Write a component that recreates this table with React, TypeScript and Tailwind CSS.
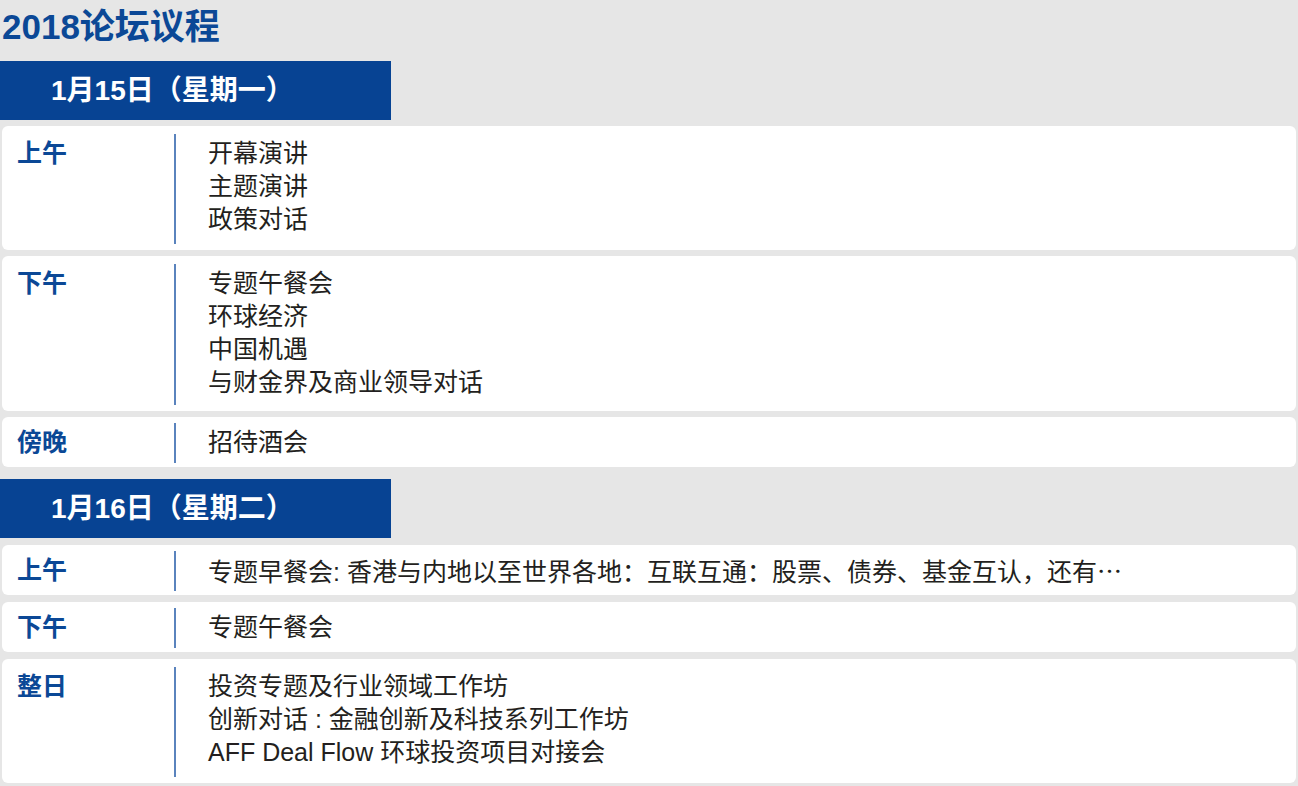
import React from "react";

type Session = {
  label: string;
  items: React.ReactNode[];
  size: string;
};

type Day = {
  date: string;
  top: string;
  list: string;
  sessions: Session[];
};

const multi = "h-[124px] pt-[8px] pb-[6px]";
const single = "h-[50px] pt-[6px] pb-[4px]";

const days: Day[] = [
  {
    date: "1月15日（星期一）",
    top: "",
    list: "mt-[6px] gap-[6px]",
    sessions: [
      { label: "上午", items: ["开幕演讲", "主题演讲", "政策对话"], size: multi },
      {
        label: "下午",
        items: ["专题午餐会", "环球经济", "中国机遇", "与财金界及商业领导对话"],
        size: "h-[155px] pt-[8px] pb-[6px]",
      },
      { label: "傍晚", items: ["招待酒会"], size: single },
    ],
  },
  {
    date: "1月16日（星期二）",
    top: "mt-[12px]",
    list: "mt-[7px] gap-[7px]",
    sessions: [
      {
        label: "上午",
        items: [
          <>
            专题早餐会: 香港与内地以至世界各地：互联互通：股票、债券、基金互认，还有
            <span className="font-['Noto_Sans_CJK_SC',sans-serif]">…</span>
          </>,
        ],
        size: single,
      },
      { label: "下午", items: ["专题午餐会"], size: single },
      {
        label: "整日",
        items: [
          "投资专题及行业领域工作坊",
          "创新对话 : 金融创新及科技系列工作坊",
          "AFF Deal Flow 环球投资项目对接会",
        ],
        size: multi,
      },
    ],
  },
];

const font = "font-['Liberation_Sans','Noto_Sans_CJK_SC',sans-serif]";

const SessionCard = ({ session }: { session: Session }) => (
  <div className={`mx-[2px] flex rounded-[6px] bg-white ${session.size}`}>
    {/* time label */}
    <div className="w-[172px] shrink-0 pl-[15px] pt-[3px] text-[25px] font-bold leading-[33px] text-[#0b4896]">
      {session.label}
    </div>
    {/* agenda items */}
    <div className="flex-1 border-l-2 border-[#5a83bd] pl-[32px] pt-[3px] text-[25px] leading-[33px] text-[#231f20]">
      {session.items.map((item, i) => (
        <div key={i} className="whitespace-nowrap">
          {item}
        </div>
      ))}
    </div>
  </div>
);

const App = () => {
  return (
    <div className={`h-[786px] w-[1298px] overflow-hidden bg-[#e6e6e6] ${font}`}>
      <h1 className="flex h-[61px] items-center pb-[9px] pl-[2px] text-[35px] font-bold leading-none text-[#0b4896]">
        2018论坛议程
      </h1>

      {days.map((day) => (
        <div key={day.date} className={day.top}>
          <div className="flex h-[59px] w-[391px] items-center bg-[#074393] pl-[51px] text-[28px] font-bold leading-none text-white">
            {day.date}
          </div>
          <div className={`flex flex-col ${day.list}`}>
            {day.sessions.map((s, i) => (
              <SessionCard key={i} session={s} />
            ))}
          </div>
        </div>
      ))}
    </div>
  );
};

export default App;
